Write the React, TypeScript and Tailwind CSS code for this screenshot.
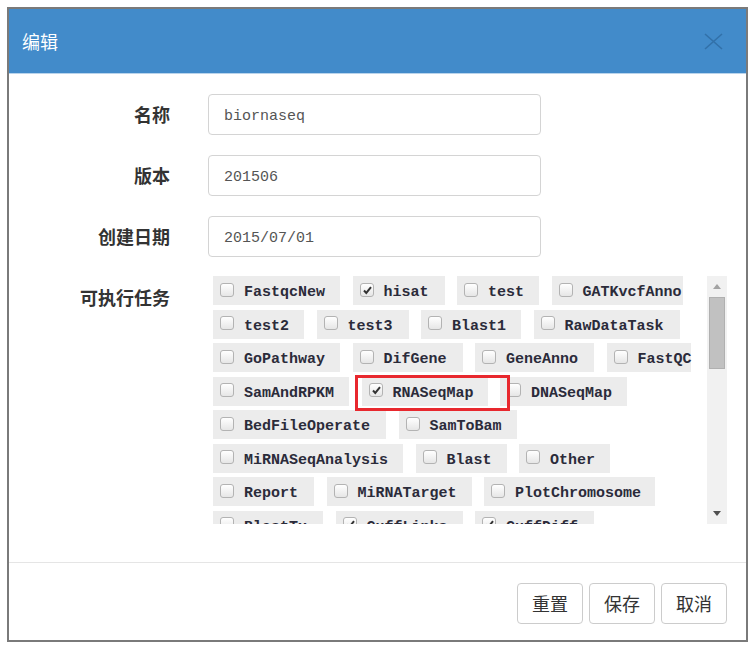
import React from 'react';

type Task = { name: string; width: number; checked?: boolean; marked?: boolean };

const tasks: Task[] = [
  { name: 'FastqcNew', width: 127 },
  { name: 'hisat', width: 92, checked: true },
  { name: 'test', width: 82 },
  { name: 'GATKvcfAnno', width: 131 },
  { name: 'test2', width: 91 },
  { name: 'test3', width: 92 },
  { name: 'Blast1', width: 100 },
  { name: 'RawDataTask', width: 146 },
  { name: 'GoPathway', width: 127 },
  { name: 'DifGene', width: 110 },
  { name: 'GeneAnno', width: 119 },
  { name: 'FastQC', width: 84 },
  { name: 'SamAndRPKM', width: 136 },
  { name: 'RNASeqMap', width: 126, checked: true, marked: true },
  { name: 'DNASeqMap', width: 127 },
  { name: 'BedFileOperate', width: 173 },
  { name: 'SamToBam', width: 118 },
  { name: 'MiRNASeqAnalysis', width: 190 },
  { name: 'Blast', width: 91 },
  { name: 'Other', width: 91 },
  { name: 'Report', width: 101 },
  { name: 'MiRNATarget', width: 145 },
  { name: 'PlotChromosome', width: 171 },
  { name: 'BlastTx', width: 110 },
  { name: 'CuffLinks', width: 127, checked: true },
  { name: 'CuffDiff', width: 119, checked: true },
];

const cjk = { fontFamily: '"Noto Sans CJK SC", sans-serif' };
const mono = { fontFamily: '"Liberation Mono", "Noto Sans CJK SC", monospace' };

// small fake checkbox, like the old browser default
const Box = ({ checked }: { checked?: boolean }) => (
  <span className="relative w-[14px] h-[14px] shrink-0 -translate-y-[1px] rounded-[3px] border border-[#b3b3b3] bg-gradient-to-b from-white to-[#e6e6e6]">
    {checked && (
      <svg className="absolute left-[1px] top-[1px]" width="11" height="11" viewBox="0 0 11 11">
        <path d="M2 5.5 L4.3 8 L9 2.2" fill="none" stroke="#333" strokeWidth="2" />
      </svg>
    )}
  </span>
);

const TaskItem = ({ task }: { task: Task }) => (
  <label
    className="relative flex items-center shrink-0 h-[29px] pl-[7px] gap-[10px] bg-[#ececec] whitespace-nowrap"
    style={{ width: task.width }}
  >
    <Box checked={task.checked} />
    <span className="text-[15px] font-bold text-[#2b2b3a] leading-none translate-y-[2px]" style={mono}>
      {task.name}
    </span>
    {/* red annotation frame */}
    {task.marked && (
      <span className="absolute z-10 -left-[7px] -top-[2px] -right-[22px] -bottom-[5px] border-[3px] border-[#e8282e] pointer-events-none" />
    )}
  </label>
);

const FormRow = ({ label, value }: { label: string; value: string }) => (
  <div className="flex items-center">
    <div className="w-[161px] text-right text-[18px] font-bold text-[#333]" style={cjk}>
      {label}
    </div>
    <div className="ml-[38px] w-[333px] h-[41px] flex items-center px-[15px] border border-[#d4d4d4] rounded-[4px] bg-white">
      <span className="text-[15px] text-[#555] translate-y-[3px]" style={mono}>{value}</span>
    </div>
  </div>
);

export default function App() {
  return (
    <div className="w-[755px] h-[649px] bg-white pl-[7px] pt-[7px]">
      <div className="w-[741px] h-[635px] border-2 border-[#7a7a7a] flex flex-col bg-white">
        {/* header */}
        <div className="h-[65px] shrink-0 flex items-center justify-between pl-[13px] pr-[23px] bg-[#428bca] border-b border-[#b9d4ec]">
          <span className="text-[18px] text-white" style={cjk}>编辑</span>
          <svg width="19" height="17" viewBox="0 0 19 17">
            <path d="M1 1 L18 16 M18 1 L1 16" stroke="#3271a9" strokeWidth="1.6" fill="none" />
          </svg>
        </div>

        {/* body */}
        <div className="flex-1 pt-[20px] flex flex-col gap-[20px]">
          <FormRow label="名称" value="biornaseq" />
          <FormRow label="版本" value="201506" />
          <FormRow label="创建日期" value="2015/07/01" />

          <div className="flex -mt-[1px]">
            <div className="w-[161px] pt-[9px] text-right text-[18px] leading-[24px] font-bold text-[#333]" style={cjk}>
              可执行任务
            </div>
            <div className="ml-[42px] w-[515px] h-[248px] flex">
              <div className="flex-1 pl-[1px] overflow-hidden">
                <div className="flex flex-wrap gap-x-[12.5px] gap-y-[4.5px]">
                  {tasks.map((t) => (
                    <TaskItem key={t.name} task={t} />
                  ))}
                </div>
              </div>
              {/* scrollbar */}
              <div className="w-[20px] bg-[#f1f1f1] flex flex-col items-center">
                <div className="h-[21px] flex items-center justify-center">
                  <svg width="8" height="5" viewBox="0 0 8 5"><path d="M0 5 L4 0 L8 5 Z" fill="#a3a3a3" /></svg>
                </div>
                <div className="w-[16px] h-[72px] bg-[#c1c1c1] border border-[#b0b0b0]" />
                <div className="flex-1" />
                <div className="h-[21px] flex items-center justify-center">
                  <svg width="8" height="5" viewBox="0 0 8 5"><path d="M0 0 L4 5 L8 0 Z" fill="#505050" /></svg>
                </div>
              </div>
            </div>
          </div>
        </div>

        {/* footer */}
        <div className="h-[78px] shrink-0 border-t border-[#e5e5e5] flex justify-end items-start pt-[20px] pr-[19px] gap-[6px]">
          {['重置', '保存', '取消'].map((b) => (
            <button
              key={b}
              className="w-[66px] h-[41px] border border-[#cccccc] rounded-[4px] bg-white text-[18px] text-[#333]"
              style={cjk}
            >
              {b}
            </button>
          ))}
        </div>
      </div>
    </div>
  );
}
